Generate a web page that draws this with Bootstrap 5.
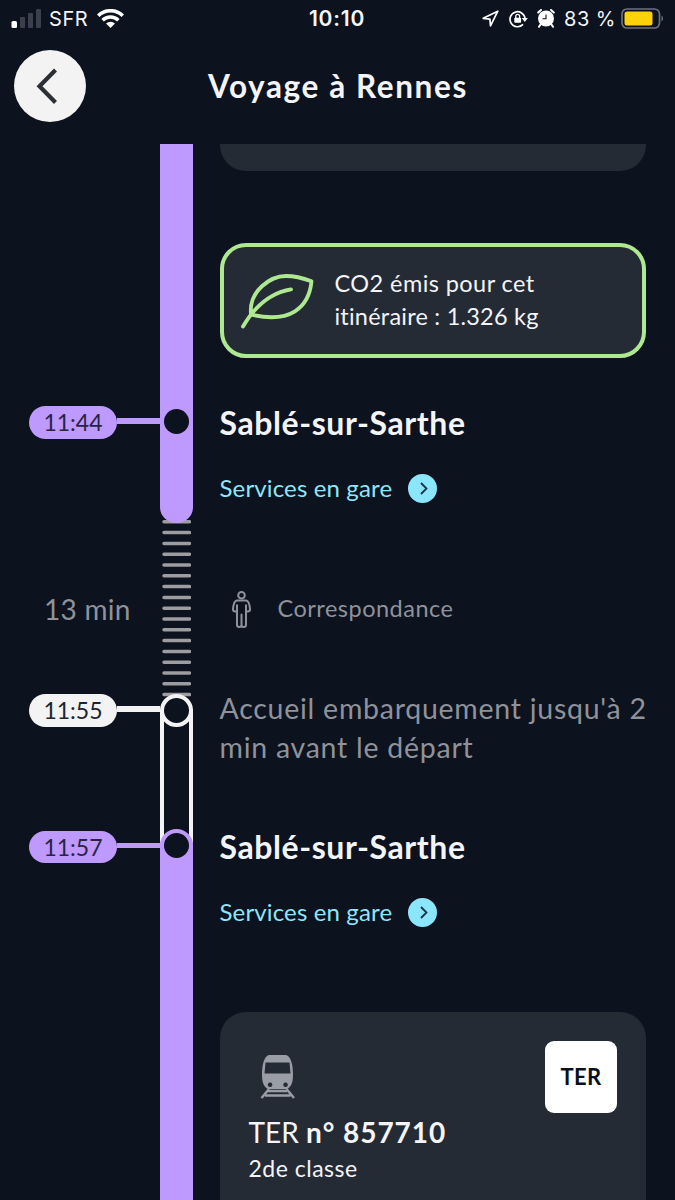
<!DOCTYPE html>
<html lang="fr">
<head>
<meta charset="utf-8">
<meta name="viewport" content="width=device-width, initial-scale=1">
<title>Voyage à Rennes</title>
<link href="https://cdn.jsdelivr.net/npm/bootstrap@5.3.0/dist/css/bootstrap.min.css" rel="stylesheet">
<style>
  :root { --night:#0c121e; --panel:#252b35; --lilac:#be99fe; --paper:#f3f3f3; --mute:#8f929b; --sky:#8ce6fb; --leaf:#aee992; }
  body { background:var(--night); color:#f4f5fa; font-family:Lato,"Liberation Sans",sans-serif; height:1200px; overflow:hidden; font-variant-ligatures:none; }
  svg { display:block; flex:none; }
  .statusbar { height:37px; font-family:Inter,"Liberation Sans",sans-serif; font-size:20px; line-height:37px; white-space:nowrap; letter-spacing:.35px; }
  .statusbar > div { flex:1 1 0; }
  .status-left { padding-left:11px; }
  .status-right { padding-right:11px; }
  .carrier { margin:1px 9px 0 7px; letter-spacing:.6px; }
  .battery-text { margin:1px 0 0 9px; letter-spacing:.5px; }
  .clock { font-size:21px; letter-spacing:.8px; font-weight:600; margin-right:1px; }
  .titlebar { height:107px; padding:13px 14px 0; }
  .back-btn { width:72px; height:72px; background:var(--paper); }
  .page-title { font-size:31.5px; line-height:36px; font-weight:700; letter-spacing:1.6px; margin:18px 0 0 122px; }
  .leg { display:grid; grid-template-columns:160px 32.5px 1fr; }
  .leg-first { height:379px; }
  .leg-transfer { height:172px; }
  .leg-boarding { height:135px; }
  .leg-next { height:370px; }
  .leg-body { padding:0 29px 0 27px; }
  .stamp { padding-left:29px; height:33px; }
  .stamp .pill { width:88px; height:32.5px; border-radius:17px; font-size:23px; line-height:32px; color:#2b2344; text-align:center; flex:none; }
  .stamp .pill.paper { color:#20242f; }
  .stamp .wire { height:5.5px; margin-bottom:3px; flex:1; }
  .lilac { background:var(--lilac); }
  .paper { background:var(--paper); }
  .rail { position:relative; }
  .rail-end { border-radius:0 0 16px 16px; z-index:1; }
  .rail-start { border-radius:16px 16px 0 0; z-index:1; }
  .rail-hollow { border:solid var(--paper); border-width:0 4px; margin:14px 0 -14px; }
  .knob { position:absolute; left:3.75px; width:25px; height:25px; border-radius:50%; background:var(--night); }
  .knob.ring { left:-.25px; width:33px; height:33px; border:4px solid; }
  .panel { background:var(--panel); border-radius:26px; }
  .panel-tail { height:27px; border-radius:0 0 26px 26px; }
  .co2 { height:115px; margin-top:72px; border:4px solid var(--leaf); padding-left:17px; }
  .co2-text { margin-left:19px; font-size:23.5px; line-height:32.5px; margin-top:-2px; }
  .station { font-size:32px; line-height:38px; font-weight:700; margin:0; letter-spacing:.57px; }
  .link-row { font-size:24px; line-height:30px; color:var(--sky); letter-spacing:.14px; margin-top:30px; }
  .link-row svg { margin:2px 0 0 16px; }
  .muted { color:var(--mute); }
  .duration { padding:0 0 4px 44px; font-size:28px; letter-spacing:.25px; }
  .transfer { font-size:23.5px; padding-bottom:3px; letter-spacing:.5px; }
  .ties { margin:-3px 1.5px 0 1.5px; }
  .board { font-size:28.5px; line-height:39.5px; letter-spacing:.74px; margin-top:-6.5px; white-space:nowrap; }
  .train-card { margin-top:85px; height:220px; padding:29px 29px 0; }
  .train-no { font-size:28px; line-height:38px; }
  .train-no b { letter-spacing:.95px; }
  .train-class { font-size:23px; line-height:34px; letter-spacing:.5px; }
  .logo { width:72px; height:72px; border-radius:9px; background:#fff; color:#0c0f1c; font-size:22px; font-weight:700; letter-spacing:.3px; padding-bottom:2px; }
</style>
</head>
<body>
<header>
  <div class="statusbar d-flex align-items-center">
    <div class="status-left d-flex align-items-center">
      <svg width="31" height="20" viewBox="0 0 31 20"><rect x=".5" y="12" width="5.500" height="7" rx="1.500" fill="#fff"/><g fill="#3b414c"><rect x="9" y="8" width="5" height="11" rx="1"/><rect x="17" y="4" width="5" height="15" rx="1"/><rect x="25" y="0" width="5" height="19" rx="1"/></g></svg>
      <span class="carrier">SFR</span>
      <svg width="27" height="20" viewBox="0 0 27 20" fill="none" stroke="#fff" stroke-width="3.500"><path d="M1.200 6.700a17.500 17.500 0 0 1 24.600 0M5.600 11.300a11.300 11.300 0 0 1 15.800 0"/><path d="M9 14.500a6.500 6.500 0 0 1 9 0L13.500 19z" fill="#fff" stroke="none"/></svg>
    </div>
    <span class="clock">10:10</span>
    <div class="status-right d-flex align-items-center justify-content-end">
      <svg width="17" height="17" viewBox="0 0 17 17" fill="none" stroke="#fff" stroke-width="1.700" stroke-linejoin="round"><path d="M15.800 1.200 1.200 8.300l6.700 .8.600 6.700z"/></svg>
      <svg style="margin-left:10px" width="19" height="18" viewBox="0 0 19 18"><path d="M14 14.400A7.500 7.500 0 1 1 16 8.500" fill="none" stroke="#fff" stroke-width="1.700"/><path d="M12.800 8h6l-3 4z" fill="#fff"/><rect x="5.300" y="7.800" width="6.800" height="5" rx=".8" fill="#fff"/><path d="M6.800 8V6.300a1.900 1.900 0 0 1 3.800 0V8" fill="none" stroke="#fff" stroke-width="1.300"/></svg>
      <svg style="margin-left:9px" width="18" height="19" viewBox="0 0 18 19"><circle cx="9" cy="9.500" r="8" fill="#fff"/><path d="M9 5.500v4.300H5.500" stroke="#0c121e" stroke-width="1.100" fill="none"/><path d="M1.200 3.600 4 1M16.800 3.600 14 1M3.500 15.500 2 17.800M14.500 15.500l1.500 2.300" stroke="#fff" stroke-width="2" stroke-linecap="round"/></svg>
      <span class="battery-text">83 %</span>
      <svg style="margin-left:5px" width="43" height="21" viewBox="0 0 43 21"><rect x="1" y="1" width="37.500" height="19" rx="5" fill="none" stroke="#6c727c" stroke-width="1.700"/><rect x="3.500" y="3.500" width="28" height="14" rx="2.500" fill="#fdd20a"/><path d="M40.500 7.500c2 .8 2 5.200 0 6z" fill="#6c727c"/></svg>
    </div>
  </div>
  <div class="titlebar d-flex align-items-start">
    <div class="back-btn rounded-circle">
      <svg width="72" height="72" viewBox="0 0 72 72" fill="none" stroke="#2c2f36" stroke-width="4.200"><path d="M41.500 20 25.500 36.200 41.500 52.500"/></svg>
    </div>
    <h1 class="page-title">Voyage à Rennes</h1>
  </div>
</header>

<main>
  <section class="leg leg-first">
    <div style="padding-top:262px"><div class="stamp d-flex align-items-center"><div class="pill lilac">11:44</div><div class="wire lilac"></div></div></div>
    <div class="rail rail-end lilac"><div class="knob" style="top:264.500px"></div></div>
    <div class="leg-body">
      <div class="panel panel-tail"></div>
      <div class="panel co2 d-flex align-items-center">
        <svg width="75" height="60" viewBox="0 0 75 60" fill="none" stroke="#aee992" stroke-width="3.800" stroke-linecap="round" stroke-linejoin="round"><path d="M2 55.500C13 36.500 28 22 50 18.300M10 43.500C7.500 19.500 30 5 45 5C55 5 63 7.500 70.500 10.300C68 36.500 49 53 10 43.500Z"/></svg>
        <div class="co2-text"><span style="letter-spacing:.43px">CO2 émis pour cet</span><br><span style="letter-spacing:.22px">itinéraire : 1.326 kg</span></div>
      </div>
      <h2 class="station" style="margin-top:46px">Sablé-sur-Sarthe</h2>
      <div class="link-row d-flex align-items-center"><span>Services en gare</span>
        <svg width="29" height="29" viewBox="0 0 29 29"><circle cx="14.500" cy="14.500" r="14.500" fill="#8ce6fb"/><path d="m13 9 5.500 5.500-5.500 5.500" fill="none" stroke="#183547" stroke-width="1.800"/></svg></div>
    </div>
  </section>

  <section class="leg leg-transfer">
    <div class="duration muted d-flex align-items-center">13 min</div>
    <svg class="ties" width="29" height="178" viewBox="0 0 29 178"><path d="M2 1.800h25.500M2 12.600h25.500M2 23.400h25.500M2 34.200h25.500M2 45h25.500M2 55.800h25.500M2 66.600h25.500M2 77.400h25.500M2 88.200h25.500M2 99h25.500M2 109.800h25.500M2 120.600h25.500M2 131.400h25.500M2 142.200h25.500M2 153h25.500M2 163.800h25.500M2 174.600h25.500" stroke="#9c9ca1" stroke-width="3.500" stroke-linecap="round"/></svg>
    <div class="leg-body transfer muted d-flex align-items-center">
      <svg style="margin-left:12px" width="19" height="37" viewBox="0 0 19 37" fill="none" stroke="#8f929b" stroke-width="2" stroke-linejoin="round"><circle cx="9.500" cy="4.300" r="3.300"/><path d="M5 9.500h9c2.500 0 4 5 4 9 0 1.500-1 2-2.500 2H14V34c0 2.500-4.500 2.500-4.500 0V23.500V34c0 2.500-4.500 2.500-4.500 0V20.500H3.500C2 20.500 1 20 1 18.500c0-4 1.500-9 4-9zM5 13.500v7M14 13.500v7"/></svg>
      <span style="margin-left:27px">Correspondance</span>
    </div>
  </section>

  <section class="leg leg-boarding">
    <div><div class="stamp d-flex align-items-center" style="margin-top:-1px"><div class="pill paper">11:55</div><div class="wire paper"></div></div></div>
    <div class="rail rail-hollow"><div class="knob ring" style="top:-15px;left:-4.250px;border-color:var(--paper)"></div></div>
    <div class="leg-body muted board">Accueil embarquement jusqu'à 2<br>min avant le départ</div>
  </section>

  <section class="leg leg-next">
    <div><div class="stamp d-flex align-items-center" style="margin-top:.5px"><div class="pill lilac">11:57</div><div class="wire lilac"></div></div></div>
    <div class="rail rail-start lilac"><div class="knob ring" style="top:-1px;border-color:var(--lilac)"></div></div>
    <div class="leg-body">
      <h2 class="station" style="margin-top:-2px">Sablé-sur-Sarthe</h2>
      <div class="link-row d-flex align-items-center"><span>Services en gare</span>
        <svg width="29" height="29" viewBox="0 0 29 29"><circle cx="14.500" cy="14.500" r="14.500" fill="#8ce6fb"/><path d="m13 9 5.500 5.500-5.500 5.500" fill="none" stroke="#183547" stroke-width="1.800"/></svg></div>
      <div class="panel train-card">
        <div class="d-flex justify-content-between">
          <svg style="margin:14px 0 0 11px" width="36" height="44" viewBox="0 0 36 44"><path fill="#9a9da5" fill-rule="evenodd" d="M9 0h17c5 1 7 10 7 20 0 8-2 12-6 14H8c-4-2-6-6-6-14C2 10 4 1 9 0zM5.500 7.500 4.500 18.500h26L29.500 7.500zM10 27.500a2.300 2.300 0 1 0 .1 0zM25.500 27.500a2.300 2.300 0 1 0 .1 0z"/><path d="M9 34 1.500 43M26.500 34l7.500 9M8 36h19M5 40.500h25.500" stroke="#9a9da5" stroke-width="2.400" fill="none"/></svg>
          <div class="logo d-flex align-items-center justify-content-center">TER</div>
        </div>
        <div class="train-no">TER <b>n° 857710</b></div>
        <div class="train-class">2de classe</div>
      </div>
    </div>
  </section>
</main>
<script src="https://cdn.jsdelivr.net/npm/bootstrap@5.3.0/dist/js/bootstrap.bundle.min.js"></script>
</body>
</html>
